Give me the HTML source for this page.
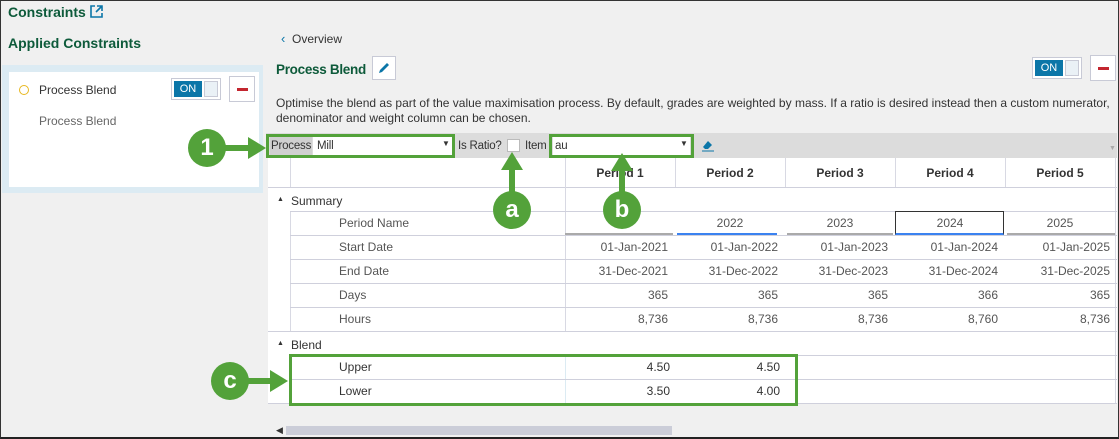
<!DOCTYPE html>
<html><head><meta charset="utf-8"><style>
*{margin:0;padding:0;box-sizing:border-box}
body{width:1119px;height:439px;overflow:hidden;background:#f0f0f0;font-family:"Liberation Sans",sans-serif;font-size:12px;color:#333;position:relative}
.a{position:absolute}
.frame{left:0;top:0;width:1119px;height:439px;border:1px solid #333;border-bottom:2px solid #222;z-index:50;pointer-events:none}
.h{font-weight:bold;color:#0d5a3a}
.g{background:#fff}
.hl{position:absolute;height:1px;background:#cfd0dc}
.vl{position:absolute;width:1px;background:#d8d9e3}
.num{position:absolute;text-align:right;width:100px}
.green{border:3px solid #53a23a;position:absolute}
.circ{position:absolute;border-radius:50%;background:#53a23a;color:#fff;font-weight:bold;font-size:24px;text-align:center;width:38px;height:38px;line-height:38px;z-index:20}
.tog{position:absolute;width:50px;height:22px;border:1px solid #c8cad6;background:#fff}
.tog i{position:absolute;left:2px;top:2px;width:28px;height:16px;background:#0b76a8;color:#fff;font-style:normal;font-size:11px;text-align:center;line-height:16px}
.tog b{position:absolute;left:32px;top:2px;width:14px;height:16px;background:#eaf1f6;border:1px solid #c8cad6}
.minus{position:absolute;width:26px;height:26px;border:1px solid #c8cad6;background:#fff}
.minus:after{content:"";position:absolute;left:7px;top:11px;width:11px;height:3px;background:#c3262f}
.tb{font-size:11.5px;letter-spacing:-0.2px}
</style></head><body>
<div class="a frame"></div>
<div class="a h" style="left:8px;top:4px;font-size:14px">Constraints</div>
<svg class="a" style="left:90px;top:5px" width="13" height="13" viewBox="0 0 13 13"><path d="M5 1H1v11h11V8" fill="none" stroke="#0b76a8" stroke-width="1.6"/><path d="M7 1h5v5M12 1L6 7" fill="none" stroke="#0b76a8" stroke-width="1.6"/></svg>
<div class="a h" style="left:8px;top:35px;font-size:14px">Applied Constraints</div>
<div class="a" style="left:2px;top:65px;width:261px;height:128px;background:#dcebf3"></div>
<div class="a g" style="left:9px;top:72px;width:250px;height:115px"></div>
<div class="a" style="left:19px;top:85px;width:10px;height:10px;border:1.5px solid #e8b820;border-radius:50%"></div>
<div class="a" style="left:39px;top:83px">Process Blend</div>
<div class="a" style="left:39px;top:114px;color:#666">Process Blend</div>
<div class="tog" style="left:171px;top:78px"><i>ON</i><b></b></div>
<div class="minus" style="left:229px;top:76px"></div>

<div class="a" style="left:281px;top:31px;color:#0b76a8;font-size:13px">‹</div>
<div class="a" style="left:292px;top:32px">Overview</div>
<div class="a h" style="left:276px;top:62px;font-size:13.5px;letter-spacing:-0.3px">Process Blend</div>
<div class="a" style="left:372px;top:56px;width:24px;height:24px;border:1px solid #c8cad6;background:#fff"></div>
<svg class="a" style="left:377px;top:61px" width="14" height="14" viewBox="0 0 14 14"><path d="M2 12l1-3 7-7 2 2-7 7z" fill="#0b76a8"/></svg>
<div class="tog" style="left:1032px;top:57px"><i>ON</i><b></b></div>
<div class="minus" style="left:1090px;top:55px"></div>
<div class="a" style="left:276px;top:96px;width:840px;line-height:15px">Optimise the blend as part of the value maximisation process. By default, grades are weighted by mass. If a ratio is desired instead then a custom numerator, denominator and weight column can be chosen.</div>

<div class="a" style="left:266px;top:133px;width:851px;height:25px;background:#dcdcdc"></div>
<div class="a tb" style="left:270px;top:137px;width:42px;height:19px;background:#d0d0d0;padding:3px 0 0 1px">Process</div>
<div class="a g tb" style="left:313px;top:137px;width:139px;height:19px;padding:3px 0 0 4px">Mill</div>
<div class="a" style="left:442px;top:139px;font-size:8px">▼</div>
<div class="a tb" style="left:458px;top:140px">Is Ratio?</div>
<div class="a g" style="left:507px;top:139px;width:13px;height:13px;border:1px solid #bbb"></div>
<div class="a tb" style="left:525px;top:140px">Item</div>
<div class="a g tb" style="left:553px;top:137px;width:137px;height:19px;padding:3px 0 0 2px">au</div>
<div class="a" style="left:680px;top:139px;font-size:8px">▼</div>
<svg class="a" style="left:701px;top:139px" width="14" height="13" viewBox="0 0 14 13"><path d="M2 8l5-6 4 4-4 4H4z" fill="#0b76a8"/><path d="M1 12h12" stroke="#0b76a8"/></svg>
<div class="green" style="left:266px;top:134px;width:189px;height:24px"></div>
<div class="green" style="left:549px;top:134px;width:145px;height:24px"></div>

<div class="a g" style="left:268px;top:158px;width:849px;height:245px"></div>
<div class="hl" style="left:268px;top:187px;width:849px"></div>
<div class="vl" style="left:290px;top:158px;height:29px"></div>
<div class="vl" style="left:290px;top:211px;height:120px"></div>
<div class="vl" style="left:290px;top:355px;height:48px"></div>
<div class="vl" style="left:565px;top:158px;height:173px"></div>
<div class="vl" style="left:565px;top:355px;height:48px;background:#dcebf3"></div>
<div class="vl" style="left:675px;top:158px;height:29px"></div><div class="vl" style="left:785px;top:158px;height:29px"></div><div class="vl" style="left:895px;top:158px;height:29px"></div><div class="vl" style="left:1005px;top:158px;height:29px"></div>
<div class="vl" style="left:1115px;top:158px;height:245px"></div>
<div class="hl" style="left:290px;top:211px;width:827px"></div>
<div class="hl" style="left:290px;top:235px;width:827px"></div>
<div class="hl" style="left:290px;top:259px;width:827px"></div>
<div class="hl" style="left:290px;top:283px;width:827px"></div>
<div class="hl" style="left:290px;top:307px;width:827px"></div>
<div class="hl" style="left:268px;top:331px;width:849px"></div>
<div class="hl" style="left:290px;top:355px;width:827px"></div>
<div class="hl" style="left:290px;top:379px;width:827px"></div>
<div class="hl" style="left:268px;top:403px;width:849px"></div>
<div class="a" style="left:565px;top:233px;width:108px;height:2px;background:#aaa"></div>
<div class="a" style="left:677px;top:233px;width:100px;height:2px;background:#3b82f0"></div>
<div class="a" style="left:787px;top:233px;width:106px;height:2px;background:#aaa"></div>
<div class="a" style="left:895px;top:211px;width:109px;height:24px;border:1px solid #333;border-bottom:2px solid #3b82f0"></div>
<div class="a" style="left:1007px;top:233px;width:108px;height:2px;background:#aaa"></div>

<div class="a" style="left:565px;top:166px;width:110px;text-align:center;font-weight:bold">Period 1</div>
<div class="a" style="left:675px;top:166px;width:110px;text-align:center;font-weight:bold">Period 2</div>
<div class="a" style="left:785px;top:166px;width:110px;text-align:center;font-weight:bold">Period 3</div>
<div class="a" style="left:895px;top:166px;width:110px;text-align:center;font-weight:bold">Period 4</div>
<div class="a" style="left:1005px;top:166px;width:110px;text-align:center;font-weight:bold">Period 5</div>
<div class="a" style="left:1109px;top:145px;font-size:7px;color:#aaa">▼</div>

<div class="a" style="left:277px;top:196px;font-size:7px">▲</div>
<div class="a" style="left:291px;top:194px">Summary</div>
<div class="a" style="left:339px;top:216px;color:#555">Period Name</div>
<div class="a" style="left:339px;top:240px;color:#555">Start Date</div>
<div class="a" style="left:339px;top:264px;color:#555">End Date</div>
<div class="a" style="left:339px;top:288px;color:#555">Days</div>
<div class="a" style="left:339px;top:312px;color:#555">Hours</div>
<div class="a" style="left:277px;top:340px;font-size:7px">▲</div>
<div class="a" style="left:291px;top:338px">Blend</div>
<div class="a" style="left:339px;top:360px">Upper</div>
<div class="a" style="left:339px;top:384px">Lower</div>

<div class="a" style="left:675px;top:216px;width:110px;text-align:center;color:#555">2022</div>
<div class="a" style="left:785px;top:216px;width:110px;text-align:center;color:#555">2023</div>
<div class="a" style="left:895px;top:216px;width:110px;text-align:center;color:#555">2024</div>
<div class="a" style="left:1005px;top:216px;width:110px;text-align:center;color:#555">2025</div>

<div style="color:#555">
<div class="num" style="left:568px;top:240px">01-Jan-2021</div><div class="num" style="left:678px;top:240px">01-Jan-2022</div><div class="num" style="left:788px;top:240px">01-Jan-2023</div><div class="num" style="left:898px;top:240px">01-Jan-2024</div><div class="num" style="left:1010px;top:240px">01-Jan-2025</div>
<div class="num" style="left:568px;top:264px">31-Dec-2021</div><div class="num" style="left:678px;top:264px">31-Dec-2022</div><div class="num" style="left:788px;top:264px">31-Dec-2023</div><div class="num" style="left:898px;top:264px">31-Dec-2024</div><div class="num" style="left:1010px;top:264px">31-Dec-2025</div>
<div class="num" style="left:568px;top:288px">365</div><div class="num" style="left:678px;top:288px">365</div><div class="num" style="left:788px;top:288px">365</div><div class="num" style="left:898px;top:288px">366</div><div class="num" style="left:1010px;top:288px">365</div>
<div class="num" style="left:568px;top:312px">8,736</div><div class="num" style="left:678px;top:312px">8,736</div><div class="num" style="left:788px;top:312px">8,736</div><div class="num" style="left:898px;top:312px">8,760</div><div class="num" style="left:1010px;top:312px">8,736</div>
</div>
<div class="num" style="left:570px;top:360px">4.50</div><div class="num" style="left:680px;top:360px">4.50</div>
<div class="num" style="left:570px;top:384px">3.50</div><div class="num" style="left:680px;top:384px">4.00</div>
<div class="green" style="left:289px;top:354px;width:509px;height:52px"></div>

<div class="a" style="left:276px;top:425px;font-size:9px">◀</div>
<div class="a" style="left:286px;top:426px;width:386px;height:9px;background:#cbcdd8"></div>

<div class="circ" style="left:188px;top:129px">1</div>
<div class="a" style="left:222px;top:145px;width:30px;height:6px;background:#53a23a"></div>
<svg class="a" style="left:248px;top:137px" width="18" height="22"><path d="M0 0L18 11L0 22z" fill="#53a23a"/></svg>
<div class="circ" style="left:493px;top:191px">a</div>
<div class="a" style="left:509px;top:168px;width:6px;height:26px;background:#53a23a"></div>
<svg class="a" style="left:501px;top:152px" width="22" height="18"><path d="M0 18L11 0L22 18z" fill="#53a23a"/></svg>
<div class="circ" style="left:603px;top:191px">b</div>
<div class="a" style="left:619px;top:170px;width:6px;height:24px;background:#53a23a"></div>
<svg class="a" style="left:611px;top:153px" width="22" height="18"><path d="M0 18L11 0L22 18z" fill="#53a23a"/></svg>
<div class="circ" style="left:211px;top:362px">c</div>
<div class="a" style="left:245px;top:378px;width:30px;height:6px;background:#53a23a"></div>
<svg class="a" style="left:270px;top:370px" width="18" height="22"><path d="M0 0L18 11L0 22z" fill="#53a23a"/></svg>
</body></html>
